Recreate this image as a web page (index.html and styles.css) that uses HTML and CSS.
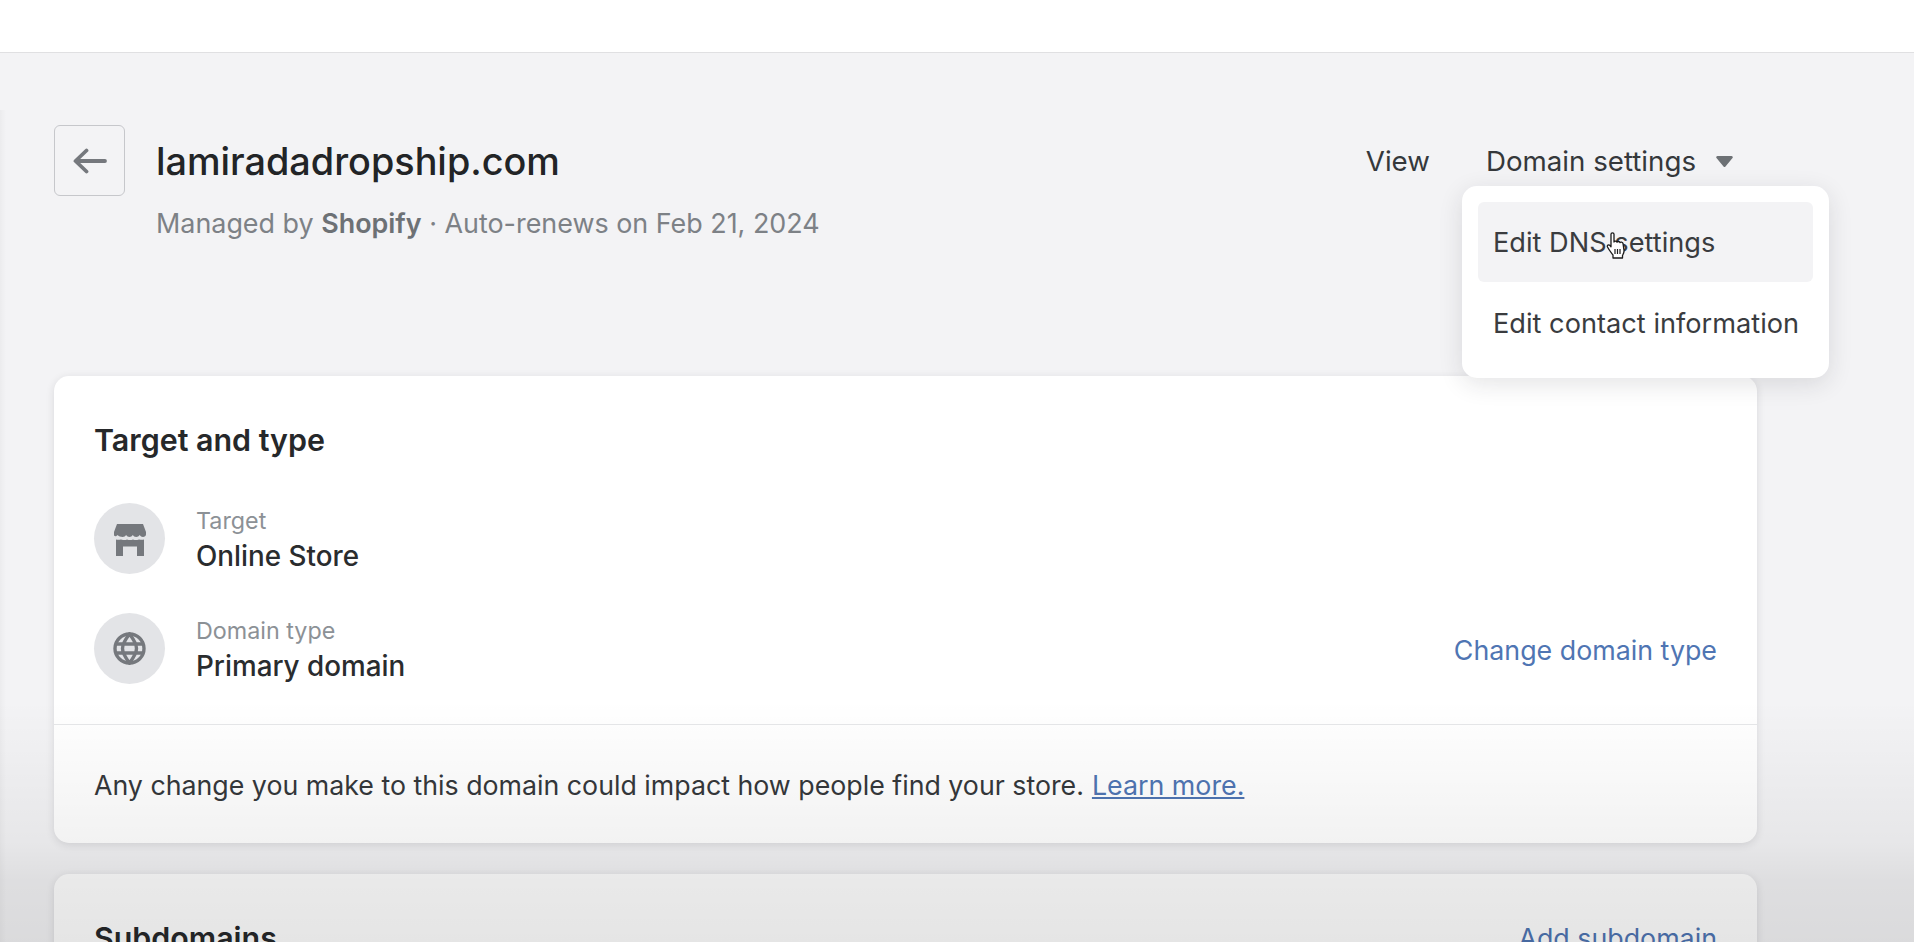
FILE: index.html
```html
<!DOCTYPE html>
<html lang="en">
<head>
<meta charset="utf-8">
<title>lamiradadropship.com</title>
<link rel="stylesheet" href="styles.css">
</head>
<body>
<div class="page">
  <div class="topbar"></div>
  <main class="main">
    <header class="header">
      <button class="back" aria-label="Back">
        <svg width="34" height="32" viewBox="0 0 34 32" fill="none" stroke="#75787d" stroke-width="3.800" stroke-linecap="round" stroke-linejoin="round"><path d="M32 16H3M13.500 5.500 2.500 16l11 10.500"/></svg>
      </button>
      <div class="titles">
        <h1 class="title">lamiradadropship.com</h1>
        <p class="subtitle">Managed by <b>Shopify</b> · Auto-renews on Feb 21, 2024</p>
      </div>
      <div class="actions">
        <span class="action">View</span>
        <span class="action">Domain settings</span>
        <svg class="caret" width="17" height="11" viewBox="0 0 17 11"><path d="M1.500 0h14a1.300 1.300 0 0 1 1 2.100L9.500 10.500a1.300 1.300 0 0 1-2 0L.5 2.100A1.300 1.300 0 0 1 1.500 0z" fill="#6d7175"/></svg>
      </div>
    </header>

    <section class="card first">
      <div class="card-body">
        <h2 class="card-title">Target and type</h2>
        <div class="row">
          <span class="circle">
            <svg class="store" width="32" height="32" viewBox="0 0 32 32" fill="#75787d"><path d="M3 0h26l3 8v2.500c0 1.500-1.500 2.500-3 2.500s-2.500-1-3.300-2c-.8 1-2 2-3.500 2s-2.700-1-3.400-2c-.7 1-2 2-3.300 2s-2.700-1-3.400-2c-.7 1-2 2-3.500 2S4.300 12 3.500 11C2.700 12 1.500 13 0 11.500V8z"/><path d="M2 15.500c1.500.3 3 .3 5 0 3 .7 4.500.7 6 0 2 .7 4 .7 6 0 2 .7 3.500.7 6 0 2 .3 3.500.3 5 0V32h-7v-9.500H9V32H2z"/></svg>
          </span>
          <div class="meta">
            <span class="label">Target</span>
            <span class="value">Online Store</span>
          </div>
        </div>
        <div class="row">
          <span class="circle">
            <svg width="33" height="33" viewBox="0 0 33 33" fill="none" stroke="#75787d" stroke-width="3.400"><circle cx="16.500" cy="16.500" r="14.500"/><path d="M3 12h27M3 21h27M16.500 2C11.500 8.500 9.500 13 9.500 16.500s2 8 7 14.500c5-6.500 7-11 7-14.500S21.500 8.500 16.500 2z"/></svg>
          </span>
          <div class="meta">
            <span class="label">Domain type</span>
            <span class="value">Primary domain</span>
          </div>
          <a class="link end">Change domain type</a>
        </div>
      </div>
      <div class="card-foot">Any change you make to this domain could impact how people find your store. <a class="link under">Learn more.</a></div>
    </section>

    <section class="card second">
      <div class="second-head">
        <h2 class="card-title">Subdomains</h2>
        <a class="link">Add subdomain</a>
      </div>
    </section>
  </main>

  <div class="shade"></div>

  <div class="menu">
    <div class="item hover">Edit DNS settings</div>
    <div class="item">Edit contact information</div>
  </div>

  <svg class="cursor" width="20" height="27" viewBox="0 0 20 27"><path d="M5 2.200c0-1.800 3-1.800 3 0V10c0-1 2.600-1.200 3 .2 .3-1 2.700-1 3 .4 .5-.8 2.700-.6 3 .9l1 7c.2 2-.8 3.500-1.500 5v2.500H7V23c-1.500-2-4-5-5.500-8-.7-1.500 1-3 2.500-1.500l1 1.300z" fill="#fff" stroke="#1b1b1b" stroke-width="1.300" stroke-linejoin="round"/><path d="M9 17v5M11.500 17v5M14 17v5" stroke="#1b1b1b" stroke-width="1.200"/></svg>
</div>
</body>
</html>
```

FILE: styles.css
```css
* { box-sizing: border-box; }
html, body { margin: 0; padding: 0; }
body {
  font-family: Inter, "Liberation Sans", sans-serif;
  color: #2c2e30;
  background: #f3f3f5;
}
.page {
  position: relative;
  width: 1914px;
  height: 942px;
  overflow: hidden;
  background: #f3f3f5;
}
.topbar {
  height: 53px;
  background: #fff;
  border-bottom: 1px solid #e0e0e2;
}
.main {
  width: 1757px;
  padding-left: 54px;
}
.header {
  display: flex;
  align-items: flex-start;
  height: 323px;
  padding-top: 72px;
}
.back {
  width: 71px;
  height: 71px;
  display: flex;
  align-items: center;
  justify-content: center;
  padding: 0;
  background: transparent;
  border: 1.500px solid #c6c7cb;
  border-radius: 6px;
}
.titles { margin-left: 31px; }
.title {
  margin: 13px 0 0;
  font-size: 37.800px;
  line-height: 46px;
  font-weight: 500;
  color: #222426;
}
.subtitle {
  margin: 23px 0 0;
  font-size: 26.900px;
  line-height: 32px;
  color: #7d8186;
}
.subtitle b { font-weight: 600; color: #6d7175; }
.actions {
  margin-left: auto;
  margin-right: 24px;
  margin-top: 18px;
  display: flex;
  align-items: center;
  height: 36px;
}
.action {
  font-size: 27.700px;
  line-height: 36px;
  color: #35383b;
}
.action + .action { margin-left: 56px; }
.caret { margin-left: 20px; }

.card {
  background: #fff;
  border-radius: 15px;
  box-shadow: 0 2px 8px rgba(30, 30, 40, .12);
}
.card-body { padding: 44px 40px 40px; height: 348px; }
.card-title {
  margin: 0 0 43px;
  font-size: 30.400px;
  line-height: 40px;
  font-weight: 600;
  color: #26282a;
}
.row {
  display: flex;
  align-items: center;
  height: 71px;
}
.row + .row { margin-top: 39px; }
.circle {
  width: 71px;
  height: 71px;
  flex: none;
  border-radius: 50%;
  background: #e3e4e7;
  display: flex;
  align-items: center;
  justify-content: center;
}
.store { margin-top: 2px; }
.meta {
  margin-left: 31px;
  display: flex;
  flex-direction: column;
}
.label {
  font-size: 23.300px;
  line-height: 34px;
  color: #8c9196;
}
.value {
  font-size: 27.800px;
  line-height: 36px;
  font-weight: 500;
  color: #2a2c2e;
}
.link { font-size: 26.800px; color: #4f75b3; }
.end { margin-left: auto; padding-top: 2px; }
.card-foot {
  height: 119px;
  padding: 2px 40px 0;
  display: flex;
  align-items: center;
  gap: 8px;
  border-top: 1px solid #e6e7e9;
  font-size: 26.750px;
  color: #35383b;
}
.under { text-decoration: underline; }
.second {
  margin-top: 31px;
  height: 200px;
}
.second-head {
  padding: 44px 40px 0;
  display: flex;
  justify-content: space-between;
  align-items: center;
}
.second-head .card-title { margin: 0; }

.shade {
  position: absolute;
  inset: 0;
  pointer-events: none;
  background:
    linear-gradient(to right, rgba(0,0,0,.03), rgba(0,0,0,0)) 0 110px / 6px 832px no-repeat,
    linear-gradient(to bottom,
      rgba(0,0,0,0) 700px,
      rgba(0,0,0,.05) 843px,
      rgba(0,0,0,.085) 880px,
      rgba(0,0,0,.1) 942px);
}
.menu {
  position: absolute;
  left: 1462px;
  top: 186px;
  width: 367px;
  height: 192px;
  padding: 16px;
  background: #fff;
  border-radius: 15px;
  box-shadow: 0 6px 24px rgba(30, 30, 40, .12);
}
.item {
  height: 80px;
  padding: 0 15px;
  display: flex;
  align-items: center;
  font-size: 27.200px;
  color: #3a3c3f;
  border-radius: 6px;
  white-space: nowrap;
}
.item + .item { padding-top: 2px; }
.hover { background: #f3f3f5; }
.cursor {
  position: absolute;
  left: 1606px;
  top: 232px;
}
```
